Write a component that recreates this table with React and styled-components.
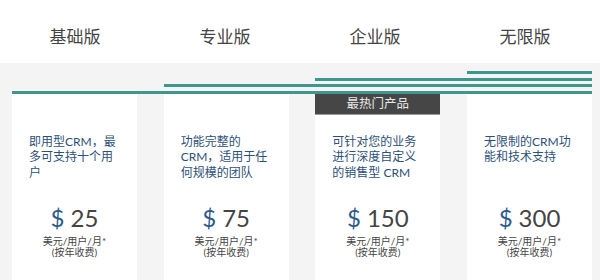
import React from 'react';
import styled, { createGlobalStyle } from 'styled-components';

const GlobalStyle = createGlobalStyle`
  html, body {
    margin: 0;
    padding: 0;
    background: #ffffff;
  }
  body {
    font-family: "Lato", "Noto Sans CJK SC", sans-serif;
    overflow: hidden;
  }
`;

const plans = [
  { name: '基础版', desc: '即用型CRM，最多可支持十个用户', price: '25' },
  { name: '专业版', desc: '功能完整的CRM，适用于任何规模的团队', price: '75' },
  { name: '企业版', desc: '可针对您的业务进行深度自定义的销售型 CRM', price: '150', badge: '最热门产品' },
  { name: '无限版', desc: '无限制的CRM功能和技术支持', price: '300' },
];

const Page = styled.div`
  width: 600px;
  height: 280px;
  overflow: hidden;
`;

const HeaderRow = styled.div`
  display: grid;
  grid-template-columns: repeat(4, 1fr);
  height: 63px;
  background: #ffffff;
`;

const HeaderCell = styled.div`
  text-align: center;
  padding-top: 25px;
  font-size: 17px;
  line-height: 24px;
  color: #444444;
`;

const Stage = styled.div`
  background: #f4f4f4;
  padding: 8px 8px 0 12px;
  height: 217px;
`;

const Rails = styled.div`
  display: grid;
  grid-template-columns: repeat(4, 1fr);
  column-gap: 26.67px;
  row-gap: 3.67px;
`;

const Rail = styled.div`
  grid-column: ${(p) => p.$from} / -1;
  height: 3px;
  background: #3f968f;
`;

const Cards = styled.div`
  display: grid;
  grid-template-columns: repeat(4, 1fr);
  column-gap: 26.67px;
`;

const Card = styled.div`
  background: #ffffff;
  min-height: 200px;
  padding-top: ${(p) => (p.$featured ? '0' : '40px')};
`;

const Badge = styled.div`
  height: 20px;
  margin-bottom: 19px;
  background: #464646;
  border-bottom: 1px solid #9a9a9a;
  color: #e8e8e8;
  font-size: 12.5px;
  line-height: 20px;
  text-align: center;
`;

const Desc = styled.div`
  padding: 0 16px 0 17px;
  min-height: 46.5px;
  font-size: 12px;
  line-height: 15.5px;
  color: #2d5077;
`;

const Price = styled.div`
  margin-top: 22.5px;
  text-align: center;
  font-size: 24px;
  line-height: 30px;
  color: #444444;
`;

const Dollar = styled.span`
  color: #2c5a8c;
  margin-right: 6px;
`;

const Unit = styled.div`
  margin-top: 3px;
  text-align: center;
  font-size: 10px;
  line-height: 11px;
  color: #444444;
`;

export default function App() {
  return (
    <Page>
      <GlobalStyle />
      <HeaderRow>
        {plans.map((p) => (
          <HeaderCell key={p.name}>{p.name}</HeaderCell>
        ))}
      </HeaderRow>
      <Stage>
        <Rails>
          <Rail $from={4} />
          <Rail $from={3} />
          <Rail $from={2} />
          <Rail $from={1} />
        </Rails>
        <Cards>
          {plans.map((p) => (
            <Card key={p.name} $featured={!!p.badge}>
              {p.badge && <Badge>{p.badge}</Badge>}
              <Desc>{p.desc}</Desc>
              <Price>
                <Dollar>$</Dollar>
                {p.price}
              </Price>
              <Unit>
                美元/用户/月*
                <br />
                (按年收费)
              </Unit>
            </Card>
          ))}
        </Cards>
      </Stage>
    </Page>
  );
}
